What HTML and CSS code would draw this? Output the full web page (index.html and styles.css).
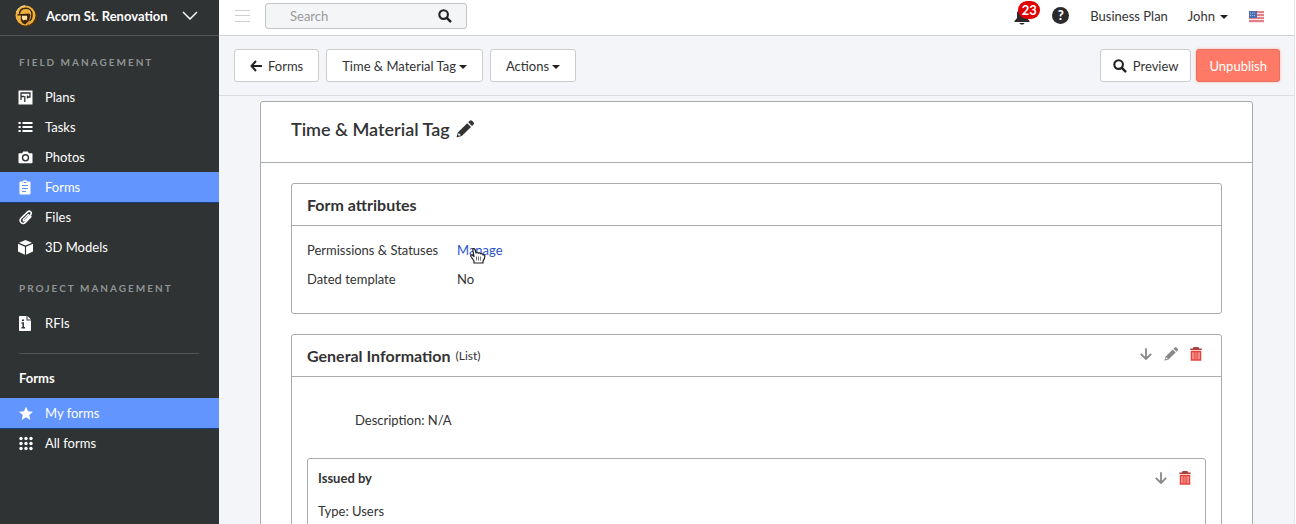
FILE: index.html
```html
<!DOCTYPE html>
<html lang="en">
<head>
<meta charset="utf-8">
<title>Time &amp; Material Tag</title>
<link rel="stylesheet" href="styles.css">
</head>
<body>
<svg class="sprite" aria-hidden="true">
  <symbol id="search" viewBox="0 0 14 14"><circle cx="5.6" cy="5.6" r="4.3" fill="none" stroke="currentColor" stroke-width="2.1"/><path d="M8.8 8.8l3.500 3.500" stroke="currentColor" stroke-width="2.500" stroke-linecap="round"/></symbol>
  <symbol id="pencil" viewBox="0 0 18 18"><path fill="currentColor" d="M11.2 3.2l3.8 3.8L5.8 16.1 1 17.3c-.3.1-.5-.1-.4-.4L1.8 12.500zM12.200 2.200l1.500-1.500c.7-.7 1.600-.7 2.300 0l1.500 1.500c.7.7.7 1.600 0 2.300L16 6z"/><path d="M2.700 13.100l2.200 2.200-1.900.5-1-.9z" fill="#fff"/></symbol>
  <symbol id="down" viewBox="0 0 12 12"><path d="M6 .3v10.400M.8 5.800L6 11l5.200-5.200" fill="none" stroke="currentColor" stroke-width="1.800"/></symbol>
  <symbol id="trash" viewBox="0 0 12 14"><path d="M.3 2.300h11.400M3.500 1.900L4 .8h4l.5 1.100" fill="none" stroke="#a8423f" stroke-width="1.500"/><path d="M1.500 4.500h9v8.500h-9z" fill="#f9a59f" stroke="#e5423c" stroke-width="1.500"/><path d="M4.200 5v7.500M6 5v7.500M7.800 5v7.500" stroke="#e5423c"/></symbol>
</svg>
<div class="app">
  <aside class="sidebar">
    <button class="project" type="button">
      <svg class="logo" viewBox="0 0 22 22"><circle cx="11.500" cy="11.500" r="10.500" fill="#51300b"/><circle cx="10.500" cy="10.500" r="10" fill="#efb13d"/><path d="M1.500 7A10 10 0 0 1 10 .7" fill="none" stroke="#fbe2a0"/><path d="M4.500 8.800C4.800 5.300 7.500 3.300 10.700 3.300c3.700 0 6.300 2.500 6.300 6 0 3.500-.9 5.700-2.700 7.200l-1 3.500" fill="none" stroke="#3b260c" stroke-width="1.500"/><path d="M2.500 9.200l11.500-.6 1.500 1.500-1.200 5-3.800 4.400-3-1.200-1.800-3.200.4-4.600-3.600.1z" fill="#3b260c"/><path d="M7 10.800h4.800l.5 1.800-.7 2.600-1.600-.5-1.900.7-1.200-1.900z" fill="#ffe0a0"/><path d="M12 19.500l2.500-4 1 .5-.5 3.500z" fill="#e2a43a"/></svg>
      <span>Acorn St. Renovation</span>
      <svg class="chev" viewBox="0 0 16 9"><path d="M1 1l7 7 7-7" fill="none" stroke="#fff" stroke-width="1.500"/></svg>
    </button>
    <nav>
      <h2 class="group">Field Management</h2>
      <a class="item" href="#"><svg viewBox="0 0 15 15"><path fill="#fff" d="M.5.5h14v14H.5z"/><path d="M3 10V3h9v4H9.500V5.500M3 6.500h3M6.800 6v6M9.500 8.500V6.500" fill="none" stroke="#2f3333" stroke-width="1.300"/></svg>Plans</a>
      <a class="item" href="#"><svg viewBox="0 0 15 15"><path d="M.5 3h2.200M.5 7h2.200M.5 11h2.200M4.500 3h10M4.500 7h10M4.500 11h10" stroke="#fff" stroke-width="2.200"/></svg>Tasks</a>
      <a class="item" href="#"><svg viewBox="0 0 15 15"><path fill="#fff" d="M1.500 3.200h2.700L5.200 1.500h4.600l1 1.700h2.700c.6 0 1 .4 1 1v8c0 .6-.4 1-1 1h-12c-.6 0-1-.4-1-1v-8c0-.6.4-1 1-1z"/><circle cx="7.500" cy="7.800" r="3" fill="none" stroke="#2f3333" stroke-width="1.400"/></svg>Photos</a>
      <a class="item active" href="#"><svg viewBox="0 0 15 15"><path fill="#fff" d="M2.500 1.500h2.300C5.200-.3 8.800-.3 9.200 1.500h2.300c.6 0 1 .4 1 1v11c0 .5-.4 1-1 1h-9c-.5 0-1-.5-1-1v-11c0-.6.5-1 1-1z"/><path d="M4 5.500h6M4 8.500h6M4 11.500h4M5.500 2.500h3" stroke="#6295fd" stroke-width="1.200"/></svg>Forms</a>
      <a class="item" href="#"><svg viewBox="0 0 15 15"><path d="M10.500 4.500L5.700 9.300c-.9 1 .3 2.200 1.300 1.200l5.600-5.600c2-2.200-.9-5-3-3L3.200 8.100c-3 3.200 1.200 7.200 4.200 4.300l5.500-5.600" fill="none" stroke="#fff" stroke-width="1.500" stroke-linecap="round"/></svg>Files</a>
      <a class="item" href="#"><svg viewBox="0 0 15 15"><path fill="#fff" d="M7.500 0L14 2.700 7.500 5.600 1 2.700zM0 3.700l6.900 3v8.100L0 11.500zM15 3.700l-6.900 3v8.100l6.900-3.300z"/></svg>3D Models</a>
      <h2 class="group">Project Management</h2>
      <a class="item" href="#"><svg viewBox="0 0 15 15"><path fill="#fff" d="M2 0h6.500v4.500h4.500V14c0 .6-.4 1-1 1H2c-.6 0-1-.4-1-1V1c0-.6.400-1 1-1zM9.500 0L13 3.500H9.500z"/><path d="M4 4.200h2M3.500 7H5.200v4.500M3.500 11.800h3.500" fill="none" stroke="#2f3333" stroke-width="1.500"/></svg>RFIs</a>
    </nav>
    <nav class="sub">
      <h2 class="subhead">Forms</h2>
      <a class="item active" href="#"><svg viewBox="0 0 15 15"><path fill="#fff" d="M8 .5l2 4.800 5 .4-3.800 3.200 1.200 5L8 11.200l-4.400 2.700 1.200-5L1 5.700l5-.4z"/></svg>My forms</a>
      <a class="item" href="#"><svg viewBox="0 0 15 15"><g fill="#fff"><circle cx="3" cy="2.500" r="1.700"/><circle cx="8" cy="2.500" r="1.700"/><circle cx="13" cy="2.500" r="1.700"/><circle cx="3" cy="7.500" r="1.700"/><circle cx="8" cy="7.500" r="1.700"/><circle cx="13" cy="7.500" r="1.700"/><circle cx="3" cy="12.500" r="1.700"/><circle cx="8" cy="12.500" r="1.700"/><circle cx="13" cy="12.500" r="1.700"/></g></svg>All forms</a>
    </nav>
  </aside>
  <div class="main">
    <header class="topbar">
      <button class="plain" type="button" aria-label="Menu"><svg class="burger" viewBox="0 0 15 12"><path d="M0 .5h15M0 5.500h15M0 11.500h15" stroke="#cfcfcf"/></svg></button>
      <form class="search">
        <input type="search" placeholder="Search" aria-label="Search">
        <button class="plain" type="button" aria-label="Submit search"><svg class="i14"><use href="#search"/></svg></button>
      </form>
      <button class="plain bell" type="button" aria-label="Notifications"><svg viewBox="0 0 16 18"><path fill="#2b2b2e" d="M8 2c3 0 5 2.200 5 5v4l2.500 3v1H.5v-1L3 11V7c0-2.800 2-5 5-5zM5.500 16h5c-.5 2-4.500 2-5 0z"/></svg><span class="badge">23</span></button>
      <button class="plain help" type="button" aria-label="Help">?</button>
      <a class="plan" href="#">Business Plan</a>
      <button class="plain user" type="button">John<span class="caret"></span></button>
      <button class="plain flagbtn" type="button" aria-label="Language"><svg class="flag" viewBox="0 0 15 12"><path fill="#f7e4e4" d="M0 0h15v12H0z"/><path d="M0 1h15M0 4h15M0 7h15M0 10h15" stroke="#dc6269" stroke-width="1.400"/><path fill="#4a6fb5" d="M0 0h8v7H0z"/><path d="M1 2h6M1 4.500h6" stroke="#a9bfe4" stroke-dasharray="1 1"/></svg></button>
    </header>
    <div class="toolbar">
      <button class="btn" type="button"><svg class="back" viewBox="0 0 12 12"><path d="M6 1L1.500 6 6 11M1.500 6H12" fill="none" stroke="currentColor" stroke-width="2"/></svg>Forms</button>
      <button class="btn" type="button">Time &amp; Material Tag<span class="caret"></span></button>
      <button class="btn" type="button">Actions<span class="caret"></span></button>
      <button class="btn preview" type="button"><svg class="i14"><use href="#search"/></svg>Preview</button>
      <button class="btn danger" type="button">Unpublish</button>
    </div>
    <main class="content">
      <article class="sheet">
        <header class="sheet-head"><h1>Time &amp; Material Tag</h1><button class="plain" type="button" aria-label="Edit name"><svg class="i18"><use href="#pencil"/></svg></button></header>
        <div class="sheet-body">
          <section class="panel">
            <header class="panel-head"><h2>Form attributes</h2></header>
            <dl class="attrs">
              <dt>Permissions &amp; Statuses</dt>
              <dd><a class="manage" href="#">Manage<svg class="cursor" viewBox="0 0 16 17"><path d="M4 16v-2L1 9.500C.3 8 1.700 7.300 2.700 8.300L4 9.500 2.800 3C2.700 1.300 4.500 1 5 2.500L6 6c.8-.8 2-.6 2.300.3.800-.7 2-.4 2.300.5 1-.6 2.200 0 2.400 1.200 1-.5 1.900 0 1.900 1.200 0 2.300-.7 3.300-1.900 5V16z" fill="#fff" stroke="#222" stroke-width="1.200" stroke-linejoin="round"/><path d="M6.500 9.500v4M8.500 9.500v4M10.500 9.500v4" stroke="#777"/></svg></a></dd>
              <dt>Dated template</dt>
              <dd>No</dd>
            </dl>
          </section>
          <section class="panel">
            <header class="panel-head"><h2>General Information</h2><span class="kind">(List)</span>
              <div class="actions">
                <button class="plain" type="button" aria-label="Move down"><svg class="i12"><use href="#down"/></svg></button>
                <button class="plain" type="button" aria-label="Edit"><svg class="i13"><use href="#pencil"/></svg></button>
                <button class="plain" type="button" aria-label="Delete"><svg class="bin"><use href="#trash"/></svg></button>
              </div>
            </header>
            <div class="panel-body">
              <p class="desc">Description: N/A</p>
              <section class="field">
                <header class="field-head"><h3>Issued by</h3>
                  <div class="actions">
                    <button class="plain" type="button" aria-label="Move down"><svg class="i12"><use href="#down"/></svg></button>
                    <button class="plain" type="button" aria-label="Delete"><svg class="bin"><use href="#trash"/></svg></button>
                  </div>
                </header>
                <p>Type: Users</p>
              </section>
            </div>
          </section>
        </div>
      </article>
    </main>
  </div>
</div>
</body>
</html>
```
FILE: styles.css
```css
* { box-sizing: border-box; }
body { margin: 0; font: 13px/20px Lato, "Liberation Sans", sans-serif; color: #333; background: #fff; }
h1, h2, h3, p, dl, dd { margin: 0; }
a { color: inherit; text-decoration: none; }
button, input { font: inherit; color: inherit; }
svg { display: block; flex: none; }
.sprite { position: absolute; width: 0; height: 0; }
.plain { border: 0; padding: 0; background: none; display: flex; align-items: center; }
.app { display: flex; height: 100vh; overflow: hidden; }

.sidebar { width: 219px; flex: none; background: #2f3333; color: #fff; }
.project { display: flex; align-items: center; width: 100%; height: 36px; padding: 0 0 4px 15px; border: 0; border-bottom: 1px solid #535757; background: none; font-weight: 700; }
.logo { width: 22px; height: 22px; margin-right: 9px; }
.chev { width: 16px; height: 9px; margin-left: 14px; }
.group { margin: 0; padding: 16px 19px 10px; font-size: 10px; line-height: 20px; font-weight: 700; letter-spacing: 2px; text-transform: uppercase; color: #909393; }
.item { display: flex; align-items: center; height: 30px; padding-left: 18px; }
.item svg { width: 15px; height: 15px; margin-right: 12px; }
.active { background: #6295fd; box-shadow: 0 1px #1b3d83; }
.sub { margin-top: 15px; }
.subhead { margin: 0 20px 0 19px; padding: 14px 0 10px; border-top: 1px solid #505454; font-size: 13px; line-height: 20px; }

.main { flex: 1; min-width: 0; display: flex; flex-direction: column; margin-right: 1px; background: #f4f5f8; border-right: 1px solid #e3e4e6; }
.topbar { display: flex; align-items: center; height: 36px; padding: 0 30px 4px 16px; background: #fff; border-bottom: 1px solid #cfd0d2; flex: none; }
.burger { width: 15px; height: 12px; }
.search { display: flex; align-items: center; width: 202px; height: 26px; margin: 0 auto 0 15px; padding: 0 14px 0 24px; border: 1px solid #c4c5c6; border-radius: 3px; background: #f4f5f7; }
.search input { flex: 1; min-width: 0; padding: 0; border: 0; outline: 0; background: none; }
.search input::placeholder { color: #999; }
.i14 { width: 14px; height: 14px; color: #222; }
.bell { position: relative; margin-right: 22px; }
.bell svg { width: 16px; height: 18px; }
.badge { position: absolute; left: 4px; top: -6px; min-width: 22px; height: 18px; border-radius: 9px; background: #e00000; color: #fff; font-weight: 700; font-size: 13px; line-height: 18px; text-align: center; }
.help { width: 17px; height: 17px; justify-content: center; border-radius: 50%; background: #2b2b2e; color: #fff; font-weight: 900; font-size: 13px; line-height: 17px; }
.plan { margin: 0 20px 0 21px; }
.flagbtn { margin-left: 21px; padding-top: 2px; }
.flag { width: 15px; height: 12px; }
.caret { display: inline-block; margin-left: 5px; border: 4px solid transparent; border-top-color: #222; border-bottom: 0; vertical-align: middle; }
.user .caret { margin-top: 2px; }

.toolbar { display: flex; align-items: center; gap: 7px; height: 60px; padding: 0 14px 0 15px; border-bottom: 1px solid #dadbdd; flex: none; }
.btn { display: flex; align-items: center; height: 33px; padding: 0 15px; border: 1px solid #ccc; border-radius: 3px; background: #fff; }
.btn .caret { margin: 3px 0 0 3px; }
.back { width: 12px; height: 12px; margin-right: 6px; color: #222; }
.preview { margin: 0 -2px 0 auto; padding: 0 12px; }
.preview svg { margin-right: 6px; }
.danger { padding: 0 12px; background: #ff7a66; border-color: #e5705f; color: #fff; box-shadow: 0 0 3px #ffb3a7; }

.content { flex: 1; min-height: 0; overflow: hidden; padding: 5px 41px 0 41px; }
.sheet, .panel, .field { border: 1px solid #aaabab; border-radius: 3px; background: #fff; }
.sheet-head { display: flex; align-items: center; gap: 6px; height: 61px; padding: 0 30px 6px; border-bottom: 1px solid #aaabab; }
h1 { font-size: 18px; line-height: 24px; font-weight: 600; }
.i18 { width: 18px; height: 18px; }
.sheet-body { display: flex; flex-direction: column; gap: 20px; padding: 20px 30px; }
.panel-head { display: flex; align-items: center; height: 42px; padding: 0 15px; border-bottom: 1px solid #aaabab; }
.panel-head h2 { font-size: 16px; line-height: 24px; font-weight: 700; }
.kind { margin-left: 5px; font-size: 12px; }
.attrs { display: grid; grid-template-columns: 150px 1fr; row-gap: 9px; padding: 14px 15px 24px; }
.manage { position: relative; color: #2a55cc; }
.cursor { position: absolute; left: 13px; top: 5px; width: 16px; height: 17px; }
.actions { display: flex; align-items: center; gap: 12px; margin-left: auto; color: #888; }
.i12 { width: 12px; height: 12px; }
.i13 { width: 14px; height: 14px; }
.bin { width: 12px; height: 14px; }
.panel-head .actions { padding: 0 4px 4px 0; }
.panel-body { padding: 33px 15px 40px; }
.desc { padding: 0 48px 28px; }
.field { padding: 9px 10px; }
.field-head { display: flex; align-items: center; margin-bottom: 13px; }
.field-head .actions { padding-right: 4px; }
h3 { font-size: 13px; line-height: 20px; font-weight: 700; }
```
